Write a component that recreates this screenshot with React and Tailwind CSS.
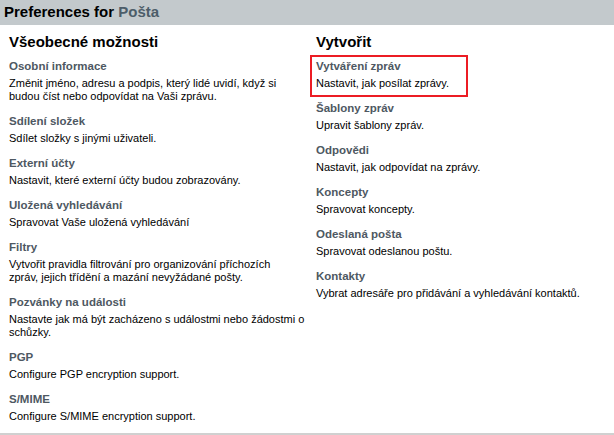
import React from "react";

const left = [
  { t: "Osobní informace", d: ["Změnit jméno, adresu a podpis, který lidé uvidí, když si", "budou číst nebo odpovídat na Vaši zprávu."] },
  { t: "Sdílení složek", d: ["Sdílet složky s jinými uživateli."] },
  { t: "Externí účty", d: ["Nastavit, které externí účty budou zobrazovány."] },
  { t: "Uložená vyhledávání", d: ["Spravovat Vaše uložená vyhledávání"] },
  { t: "Filtry", d: ["Vytvořit pravidla filtrování pro organizování příchozích", "zpráv, jejich třídění a mazání nevyžádané pošty."] },
  { t: "Pozvánky na události", d: ["Nastavte jak má být zacházeno s událostmi nebo žádostmi o", "schůzky."] },
  { t: "PGP", d: ["Configure PGP encryption support."] },
  { t: "S/MIME", d: ["Configure S/MIME encryption support."] },
];

const right = [
  { t: "Vytváření zpráv", d: ["Nastavit, jak posílat zprávy."], hl: true },
  { t: "Šablony zpráv", d: ["Upravit šablony zpráv."] },
  { t: "Odpovědi", d: ["Nastavit, jak odpovídat na zprávy."] },
  { t: "Koncepty", d: ["Spravovat koncepty."] },
  { t: "Odeslaná pošta", d: ["Spravovat odeslanou poštu."] },
  { t: "Kontakty", d: ["Vybrat adresáře pro přidávání a vyhledávání kontaktů."] },
];

function Item({ t, d, hl }) {
  return (
    <div className="relative mb-[10px]">
      {hl && (
        <div className="absolute left-[-6px] top-[-3px] w-[158px] h-[42px] border-2 border-[#ec1c24] pointer-events-none" />
      )}
      <div className="text-[11.5px] leading-[16px] font-bold text-[#4e5862] whitespace-nowrap">{t}</div>
      <div className="mt-[3px] text-[11px] leading-[13px] text-black">
        {d.map((line, i) => (
          <div key={i} className="whitespace-nowrap">{line}</div>
        ))}
      </div>
    </div>
  );
}

function Column({ title, items }) {
  return (
    <div className="pl-[9px] pt-[8px]">
      <h2 className="text-[15px] leading-[18px] font-bold text-black">{title}</h2>
      <div className="mt-[7px]">
        {items.map((it, i) => (
          <Item key={i} {...it} />
        ))}
      </div>
    </div>
  );
}

export default function App() {
  return (
    <div
      className="w-[614px] h-[435px] bg-white border-b-2 border-[#d0d0d0] overflow-hidden"
      style={{ fontFamily: '"Liberation Sans", Arial, sans-serif' }}
    >
      <div className="h-[25px] bg-[#c3c9cc] pl-[4px] text-[15px] leading-[23px] font-bold text-black">
        Preferences for <span className="text-[#4d5d69]">Pošta</span>
      </div>
      <div className="grid grid-cols-2">
        <Column title="Všeobecné možnosti" items={left} />
        <Column title="Vytvořit" items={right} />
      </div>
    </div>
  );
}
